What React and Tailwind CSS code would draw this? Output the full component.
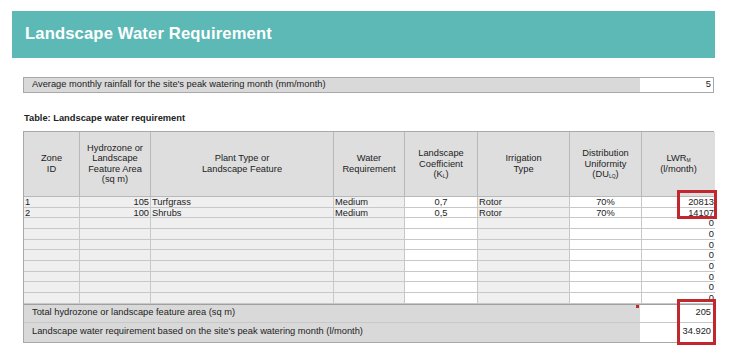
const cols = "grid-cols-[56px_71px_183px_71px_73px_92px_72px_73px]";

const headers = [
  ["Zone", "ID"],
  ["Hydrozone or", "Landscape", "Feature Area", "(sq m)"],
  ["Plant Type or", "Landscape Feature"],
  ["Water", "Requirement"],
  ["Landscape", "Coefficient", "(K\u029f)"],
  ["Irrigation", "Type"],
  ["Distribution", "Uniformity", "DU"],
  ["LWR", "(l/month)"],
];

const rows = [
  ["1", "105", "Turfgrass", "Medium", "0,7", "Rotor", "70%", "20813"],
  ["2", "100", "Shrubs", "Medium", "0,5", "Rotor", "70%", "14107"],
  ...Array.from({ length: 8 }, () => ["", "", "", "", "", "", "", "0"]),
];

// white columns: landscape coefficient, distribution, LWR
const white = [false, false, false, false, true, false, true, true];
const align = ["text-left", "text-right", "text-left", "text-left", "text-center", "text-left", "text-center", "text-right"];

function HeaderCell({ lines, i }) {
  return (
    <div className="flex flex-col items-center justify-center border-r border-b border-[#b8b8b8] bg-[#dedede] text-center leading-[10.5px] last:border-r-0">
      {i === 6 ? (
        <>
          <span>Distribution</span>
          <span>Uniformity</span>
          <span>
            (DU<sub className="text-[5px] align-baseline relative top-[1px]">LQ</sub>)
          </span>
        </>
      ) : i === 7 ? (
        <>
          <span>
            LWR<sub className="text-[5px] align-baseline relative top-[1px]">M</sub>
          </span>
          <span>(l/month)</span>
        </>
      ) : i === 4 ? (
        <>
          <span>Landscape</span>
          <span>Coefficient</span>
          <span>
            (K<sub className="text-[5px] align-baseline relative top-[1px]">L</sub>)
          </span>
        </>
      ) : (
        lines.map((l) => <span key={l}>{l}</span>)
      )}
    </div>
  );
}

export default function App() {
  return (
    <div className="w-[730px] h-[358px] bg-white relative font-['Liberation_Sans',Arial,sans-serif] text-[9.3px] text-[#222]">
      <div className="pt-[11px] pl-[12px] pr-[15px]">
        <div className="h-[47px] bg-[#5db9b6] flex items-center pl-[13px]">
          <h1 className="text-white font-bold text-[16.6px] tracking-[0.15px] mt-[-1px]">
            Landscape Water Requirement
          </h1>
        </div>
      </div>

      <div className="ml-[23px] mr-[16px] mt-[19px] h-[16px] flex border border-[#a8a8a8]">
        <div className="flex-1 bg-[#d9d9d9] flex items-center pl-[8px]">
          Average monthly rainfall for the site's peak watering month (mm/month)
        </div>
        <div className="w-[73px] bg-white flex items-center justify-end pr-[2px]">5</div>
      </div>

      <div className="ml-[24px] mt-[19px] font-bold">Table: Landscape water requirement</div>

      <div className="ml-[23px] mt-[5px] w-[691px] border border-[#a8a8a8]">
        <div className={`grid ${cols} h-[65px]`}>
          {headers.map((h, i) => (
            <HeaderCell key={i} lines={h} i={i} />
          ))}
        </div>
        {rows.map((r, ri) => (
          <div key={ri} className={`grid ${cols} h-[10.7px]`}>
            {r.map((c, ci) => (
              <div
                key={ci}
                className={`border-r border-b border-[#c8c8c8] last:border-r-0 px-[1px] leading-[10px] overflow-hidden ${align[ci]} ${
                  white[ci] ? "bg-white" : "bg-[#efefef]"
                }`}
              >
                {c}
              </div>
            ))}
          </div>
        ))}
        <div className="flex h-[19px] border-t border-[#a0a0a0] border-b border-b-[#c8c8c8]">
          <div className="flex-1 bg-[#d9d9d9] flex items-center pl-[8px]">
            Total hydrozone or landscape feature area (sq m)
          </div>
          <div className="w-[73px] bg-white flex items-center justify-end pr-[2px]">205</div>
        </div>
        <div className="flex h-[19px]">
          <div className="flex-1 bg-[#d9d9d9] flex items-center pl-[8px]">
            Landscape water requirement based on the site's peak watering month (l/month)
          </div>
          <div className="w-[73px] bg-white flex items-center justify-end pr-[2px]">34.920</div>
        </div>
      </div>

      <div className="absolute left-[677px] top-[190px] w-[40px] h-[29px] border-[3px] border-[#c1272d]" />
      <div className="absolute left-[677px] top-[299px] w-[39px] h-[46px] border-[3px] border-[#c1272d]" />
      <div className="absolute left-[636px] top-[305px] w-[3px] h-[3px] bg-[#c1272d]" />
    </div>
  );
}
